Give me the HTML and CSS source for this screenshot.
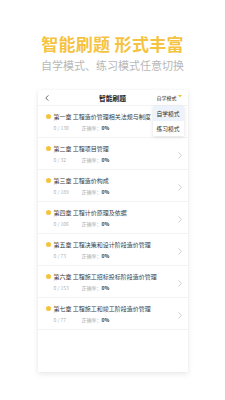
FILE: index.html
```html
<!DOCTYPE html>
<html lang="zh">
<head>
<meta charset="utf-8">
<link rel="stylesheet" href="styles.css">
</head>
<body>
<div class="page">
  <h1 class="headline">智能刷题 形式丰富</h1>
  <p class="subline">自学模式、练习模式任意切换</p>
  <div class="card">
    <div class="bar">
      <svg class="back" width="4" height="6" viewBox="0 0 4 6"><path d="M3.3 0.4 L0.8 3 L3.3 5.6" fill="none" stroke="#444" stroke-width="0.8"/></svg>
      <span class="bar-title">智能刷题</span>
      <span class="mode">自学模式<svg class="tri" width="4" height="3" viewBox="0 0 4 3"><path d="M0 0 H4 L2 2.6 Z" fill="#f3c33c"/></svg></span>
    </div>
    <div class="row">
      <div class="row-main">
        <div class="row-title"><span class="dot"></span>第一章 工程造价管理相关法规与制度</div>
        <div class="row-sub"><span class="count">0 / 130</span><span class="rate">正确率：<b>0%</b></span></div>
      </div>
    </div>
    <div class="row">
      <div class="row-main">
        <div class="row-title"><span class="dot"></span>第二章 工程项目管理</div>
        <div class="row-sub"><span class="count">0 / 32</span><span class="rate">正确率：<b>0%</b></span></div>
      </div>
      <svg class="chev" width="4" height="7" viewBox="0 0 4 7"><path d="M0.6 0.5 L3.3 3.5 L0.6 6.5" fill="none" stroke="#bdbdbd" stroke-width="0.7"/></svg>
    </div>
    <div class="row">
      <div class="row-main">
        <div class="row-title"><span class="dot"></span>第三章 工程造价构成</div>
        <div class="row-sub"><span class="count">0 / 189</span><span class="rate">正确率：<b>0%</b></span></div>
      </div>
      <svg class="chev" width="4" height="7" viewBox="0 0 4 7"><path d="M0.6 0.5 L3.3 3.5 L0.6 6.5" fill="none" stroke="#bdbdbd" stroke-width="0.7"/></svg>
    </div>
    <div class="row">
      <div class="row-main">
        <div class="row-title"><span class="dot"></span>第四章 工程计价原理及依据</div>
        <div class="row-sub"><span class="count">0 / 106</span><span class="rate">正确率：<b>0%</b></span></div>
      </div>
      <svg class="chev" width="4" height="7" viewBox="0 0 4 7"><path d="M0.6 0.5 L3.3 3.5 L0.6 6.5" fill="none" stroke="#bdbdbd" stroke-width="0.7"/></svg>
    </div>
    <div class="row">
      <div class="row-main">
        <div class="row-title"><span class="dot"></span>第五章 工程决策和设计阶段造价管理</div>
        <div class="row-sub"><span class="count">0 / 73</span><span class="rate">正确率：<b>0%</b></span></div>
      </div>
      <svg class="chev" width="4" height="7" viewBox="0 0 4 7"><path d="M0.6 0.5 L3.3 3.5 L0.6 6.5" fill="none" stroke="#bdbdbd" stroke-width="0.7"/></svg>
    </div>
    <div class="row">
      <div class="row-main">
        <div class="row-title"><span class="dot"></span>第六章 工程施工招标投标阶段造价管理</div>
        <div class="row-sub"><span class="count">0 / 153</span><span class="rate">正确率：<b>0%</b></span></div>
      </div>
      <svg class="chev" width="4" height="7" viewBox="0 0 4 7"><path d="M0.6 0.5 L3.3 3.5 L0.6 6.5" fill="none" stroke="#bdbdbd" stroke-width="0.7"/></svg>
    </div>
    <div class="row">
      <div class="row-main">
        <div class="row-title"><span class="dot"></span>第七章 工程施工和竣工阶段造价管理</div>
        <div class="row-sub"><span class="count">0 / 77</span><span class="rate">正确率：<b>0%</b></span></div>
      </div>
      <svg class="chev" width="4" height="7" viewBox="0 0 4 7"><path d="M0.6 0.5 L3.3 3.5 L0.6 6.5" fill="none" stroke="#bdbdbd" stroke-width="0.7"/></svg>
    </div>
    <div class="rest"></div>
    <div class="menu">
      <div class="menu-item active">自学模式</div>
      <div class="menu-item">练习模式</div>
    </div>
  </div>
</div>
</body>
</html>
```
FILE: styles.css
```css
* { box-sizing: border-box; }
html, body { margin: 0; padding: 0; background: #fff; }
body { font-family: "Noto Sans CJK SC", "Noto Sans", sans-serif; width: 225px; height: 400px; overflow: hidden; }
.page { padding-top: 33px; display: flex; flex-direction: column; align-items: center; }
.headline { margin: 0; font-size: 17px; line-height: 21px; font-weight: 700; color: #f5c33f; letter-spacing: 0.3px; }
.subline { margin: 4px 0 0; font-size: 11px; line-height: 14px; color: #b8b8b8; }
.card { position: relative; margin-top: 18px; width: 150px; height: 282px; background: #fff; box-shadow: 0 2px 6px rgba(0,0,0,0.09), 0 0 2px rgba(0,0,0,0.04); display: flex; flex-direction: column; }
.bar { height: 15px; display: flex; align-items: center; justify-content: center; position: relative; }
.back { position: absolute; left: 7px; top: 5px; }
.bar-title { font-size: 6.8px; font-weight: 700; color: #222; line-height: 8px; }
.mode { position: absolute; right: 6px; top: 4px; font-size: 5px; line-height: 7px; color: #333; display: flex; align-items: center; gap: 1px; }
.tri { margin-top: -2px; }
.row { height: 32px; border-top: 1px solid #f3f3f3; display: flex; align-items: flex-start; padding: 6.5px 6px 0 8px; }
.row-main { flex: 1; display: flex; flex-direction: column; gap: 3px; }
.row-title { font-size: 6px; line-height: 8px; color: #3a3a3a; display: flex; align-items: center; white-space: nowrap; }
.dot { width: 5px; height: 5px; border-radius: 50%; background: #f3c33c; margin-right: 3px; flex: none; }
.row-sub { font-size: 5px; line-height: 7px; color: #b0b0b0; display: flex; padding-left: 8px; }
.count { width: 28px; }
.rate b { color: #333; font-weight: 700; }
.chev { margin-top: 7px; flex: none; }
.rest { flex: 1; border-top: 1px solid #f3f3f3; }
.menu { position: absolute; left: 115px; top: 16px; width: 31px; background: #fff; box-shadow: 0 1px 4px rgba(0,0,0,0.13); }
.menu-item { height: 15px; font-size: 5.8px; line-height: 15px; text-align: center; color: #333; }
.menu-item.active { background: #edf3fc; }
```
